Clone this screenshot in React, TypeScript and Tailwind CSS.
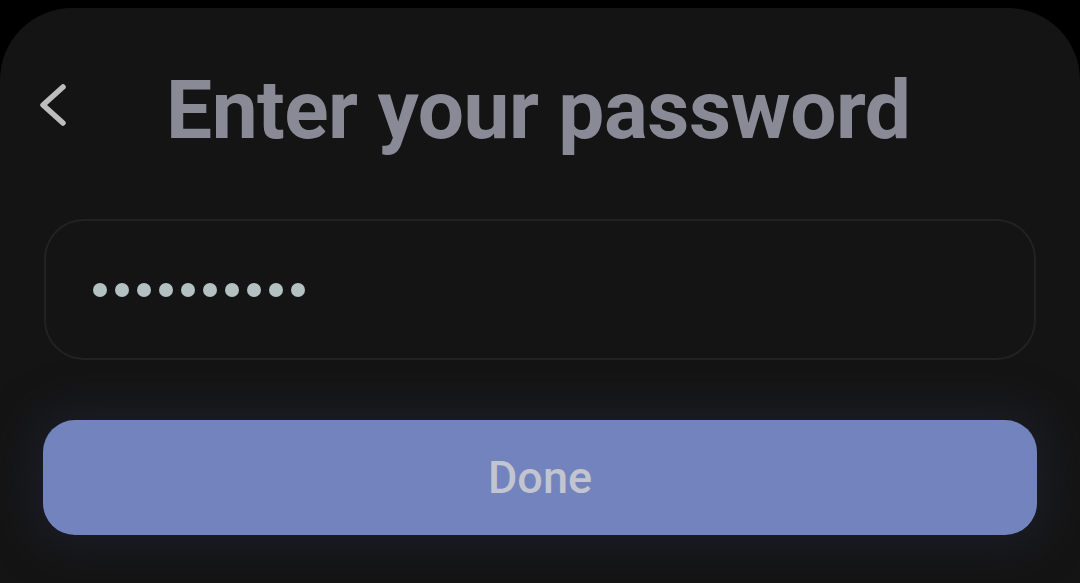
export default function App() {
  const dots = Array.from({ length: 10 });

  return (
    <div className="h-[583px] w-[1080px] overflow-hidden bg-black pt-2 font-['Roboto',sans-serif]">
      <div className="h-full rounded-t-[72px] bg-[#141414]">
        {/* Header */}
        <div className="flex items-start pt-[61px]">
          <svg
            className="ml-[36px] mt-[11px] shrink-0"
            width="34"
            height="50"
            viewBox="0 0 34 50"
            fill="none"
          >
            <path
              d="M27 7 L7 25 L27 43"
              stroke="#bdbdbd"
              strokeWidth="5.5"
              strokeLinecap="round"
              strokeLinejoin="round"
            />
          </svg>
          <h1 className="ml-[96px] text-[82px] font-bold leading-none tracking-[-0.5px] text-[#8a8996]">
            Enter your password
          </h1>
        </div>

        {/* Password field */}
        <div className="mx-[44px] mt-[68px] flex h-[141px] items-center rounded-[40px] border-2 border-[#222222] pl-[47px]">
          <div className="flex gap-[8px]">
            {dots.map((_, i) => (
              <span key={i} className="block h-[14px] w-[14px] rounded-full bg-[#b4c1c2]" />
            ))}
          </div>
        </div>

        {/* Done */}
        <button className="mx-[43px] mt-[60px] flex h-[115px] w-[994px] items-center justify-center rounded-[32px] bg-[#7283bd] text-[45px] font-medium text-[#c2c5cf] shadow-[0_0_40px_12px_rgba(32,34,48,0.7)]">
          Done
        </button>
      </div>
    </div>
  );
}
